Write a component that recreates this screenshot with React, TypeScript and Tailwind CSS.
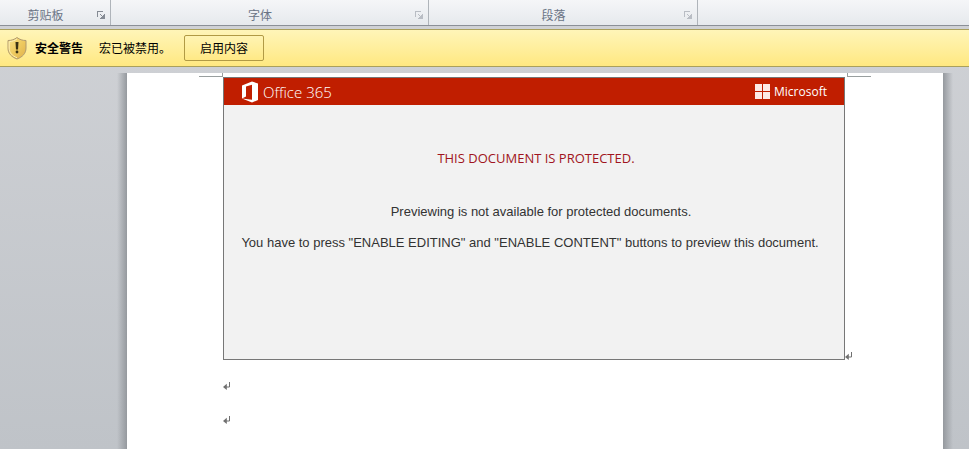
import { clsx } from "clsx";

const ribbonGroups = [
  { label: "剪贴板", width: "w-[111px]", active: true },
  { label: "字体", width: "w-[318px]", active: false },
  { label: "段落", width: "w-[269px]", active: false },
];

function LauncherIcon() {
  return (
    <svg width="8" height="8" viewBox="0 0 8 8" fill="none" stroke="currentColor" shapeRendering="crispEdges">
      <path d="M0.5 6V0.5H6" />
      <path d="M3 3L6 6" shapeRendering="auto" />
      <path d="M7.5 3V7.5H3M6.5 4V6.5H4" />
    </svg>
  );
}

function ShieldIcon() {
  return (
    <svg width="20" height="23" viewBox="0 0 20 23">
      <defs>
        <linearGradient id="shield" x1="0" y1="0" x2="1" y2="1">
          <stop offset="0" stopColor="#f8e08a" />
          <stop offset="0.5" stopColor="#efcb60" />
          <stop offset="1" stopColor="#dfb04c" />
        </linearGradient>
      </defs>
      <path
        d="M10 0.5C7.5 2.5 4.5 3.5 1 3.5V11C1 16.5 4.5 20 10 22C15.5 20 19 16.5 19 11V3.5C15.5 3.5 12.5 2.5 10 0.5Z"
        fill="url(#shield)"
        stroke="#b09a70"
      />
      <path
        d="M10 2C7.5 3.7 5 4.5 2.2 4.7V11C2.2 15.8 5.2 18.9 10 20.7"
        fill="none"
        stroke="#fbeeb5"
      />
      <path d="M8.5 5H11.5L11 12.5H9Z" fill="#3a3114" />
      <circle cx="10" cy="15" r="1.4" fill="#3a3114" />
    </svg>
  );
}

function OfficeLogo() {
  return (
    <svg width="18" height="22" viewBox="0 0 18 22" fill="#fff">
      <path d="M1 4.5L11 0.5L17 2.5V19L11 21.5L1 17.5L11 18.8V3.8L5 5.5V15.5L1 17.5Z" />
    </svg>
  );
}

function WindowsLogo() {
  return (
    <svg width="15" height="15" viewBox="0 0 15 15" fill="#fdeae6" shapeRendering="crispEdges">
      <path d="M0 0H7V7H0ZM8 0H15V7H8ZM0 8H7V15H0ZM8 8H15V15H8Z" />
    </svg>
  );
}

function ReturnMark() {
  return (
    <svg width="8" height="8" viewBox="0 0 8 8" className="block text-[#707070]">
      <path d="M6.5 0V5H2" fill="none" stroke="currentColor" />
      <path d="M0 5L3.8 1.8V8Z" fill="currentColor" />
    </svg>
  );
}

function Ribbon() {
  return (
    <div className="flex h-[26px] border-b border-[#8b9097] bg-linear-to-b from-[#f5f6f8] to-[#e6e9ed]">
      {ribbonGroups.map(({ label, width, active }) => (
        <div
          key={label}
          className={clsx("flex shrink-0 items-center border-r border-[#afb4ba] pt-1", width)}
        >
          <span className="flex-1 pr-[6px] text-center text-[12px] leading-4 text-[#6a7485]">{label}</span>
          <button
            type="button"
            aria-label={label}
            className={clsx("mr-[5px]", active ? "text-[#858b94]" : "text-[#b9bdc4]")}
          >
            <LauncherIcon />
          </button>
        </div>
      ))}
    </div>
  );
}

function SecurityBar() {
  return (
    <div className="mt-[3px] flex h-[38px] items-center border-y border-[#aaa05c] bg-linear-to-b from-[#fff5b8] to-[#ffe880] pl-[7px] text-[12px] leading-4 text-black">
      <ShieldIcon />
      <strong className="ml-2 font-bold">安全警告</strong>
      <span className="ml-4">宏已被禁用。</span>
      <button
        type="button"
        className="ml-[13px] h-[26px] w-20 rounded-[2px] border border-[#b19a45] bg-linear-to-b from-[#fff4b3] to-[#ffe985]"
      >
        启用内容
      </button>
    </div>
  );
}

function ProtectedNotice() {
  return (
    <section className="flex h-[283px] flex-1 flex-col border border-[#777] bg-[#f2f2f2]">
      <header className="flex h-[27px] items-center justify-between bg-[#c01e00] px-[17px] font-['Open_Sans',sans-serif] text-white">
        <div className="flex items-center gap-1">
          <OfficeLogo />
          <span className="text-[15px] leading-5 font-light">Office 365</span>
        </div>
        <div className="flex items-center gap-1">
          <WindowsLogo />
          <span className="text-[12px] leading-4 font-medium">Microsoft</span>
        </div>
      </header>
      <div className="text-center font-['Liberation_Sans',Arial,sans-serif] text-[13px] leading-4 text-[#333]">
        <h1 className="mt-[45px] pl-1 font-['Open_Sans',sans-serif] text-[#a01420]">
          THIS DOCUMENT IS PROTECTED.
        </h1>
        <p className="mt-[38px] pl-[14px]">Previewing is not available for protected documents.</p>
        <p className="mt-[15px] pr-2">
          You have to press "ENABLE EDITING" and "ENABLE CONTENT" buttons to preview this document.
        </p>
      </div>
    </section>
  );
}

export default function App() {
  return (
    <div className="flex h-screen flex-col overflow-hidden bg-linear-to-b from-[#d0d2d6] to-[#bfc3c8] font-['Noto_Sans_CJK_SC',sans-serif]">
      <Ribbon />
      <SecurityBar />
      <main className="mt-[6px] flex flex-1 px-4">
        <div className="ml-[101px] w-[10px] bg-linear-to-r from-transparent to-[#95999e]" />
        <article className="flex-1 bg-white">
          <div className="flex h-1 justify-between px-[72px]">
            <span className="w-6 border-r border-b border-[#999f9f]" />
            <span className="w-6 border-b border-l border-[#999f9f]" />
          </div>
          <div className="flex items-end pr-[90px] pl-24">
            <ProtectedNotice />
            <ReturnMark />
          </div>
          <div className="flex flex-col gap-[26px] pt-[22px] pl-24">
            <ReturnMark />
            <ReturnMark />
          </div>
        </article>
        <div className="w-[10px] bg-linear-to-r from-[#95999e] to-transparent" />
      </main>
    </div>
  );
}
